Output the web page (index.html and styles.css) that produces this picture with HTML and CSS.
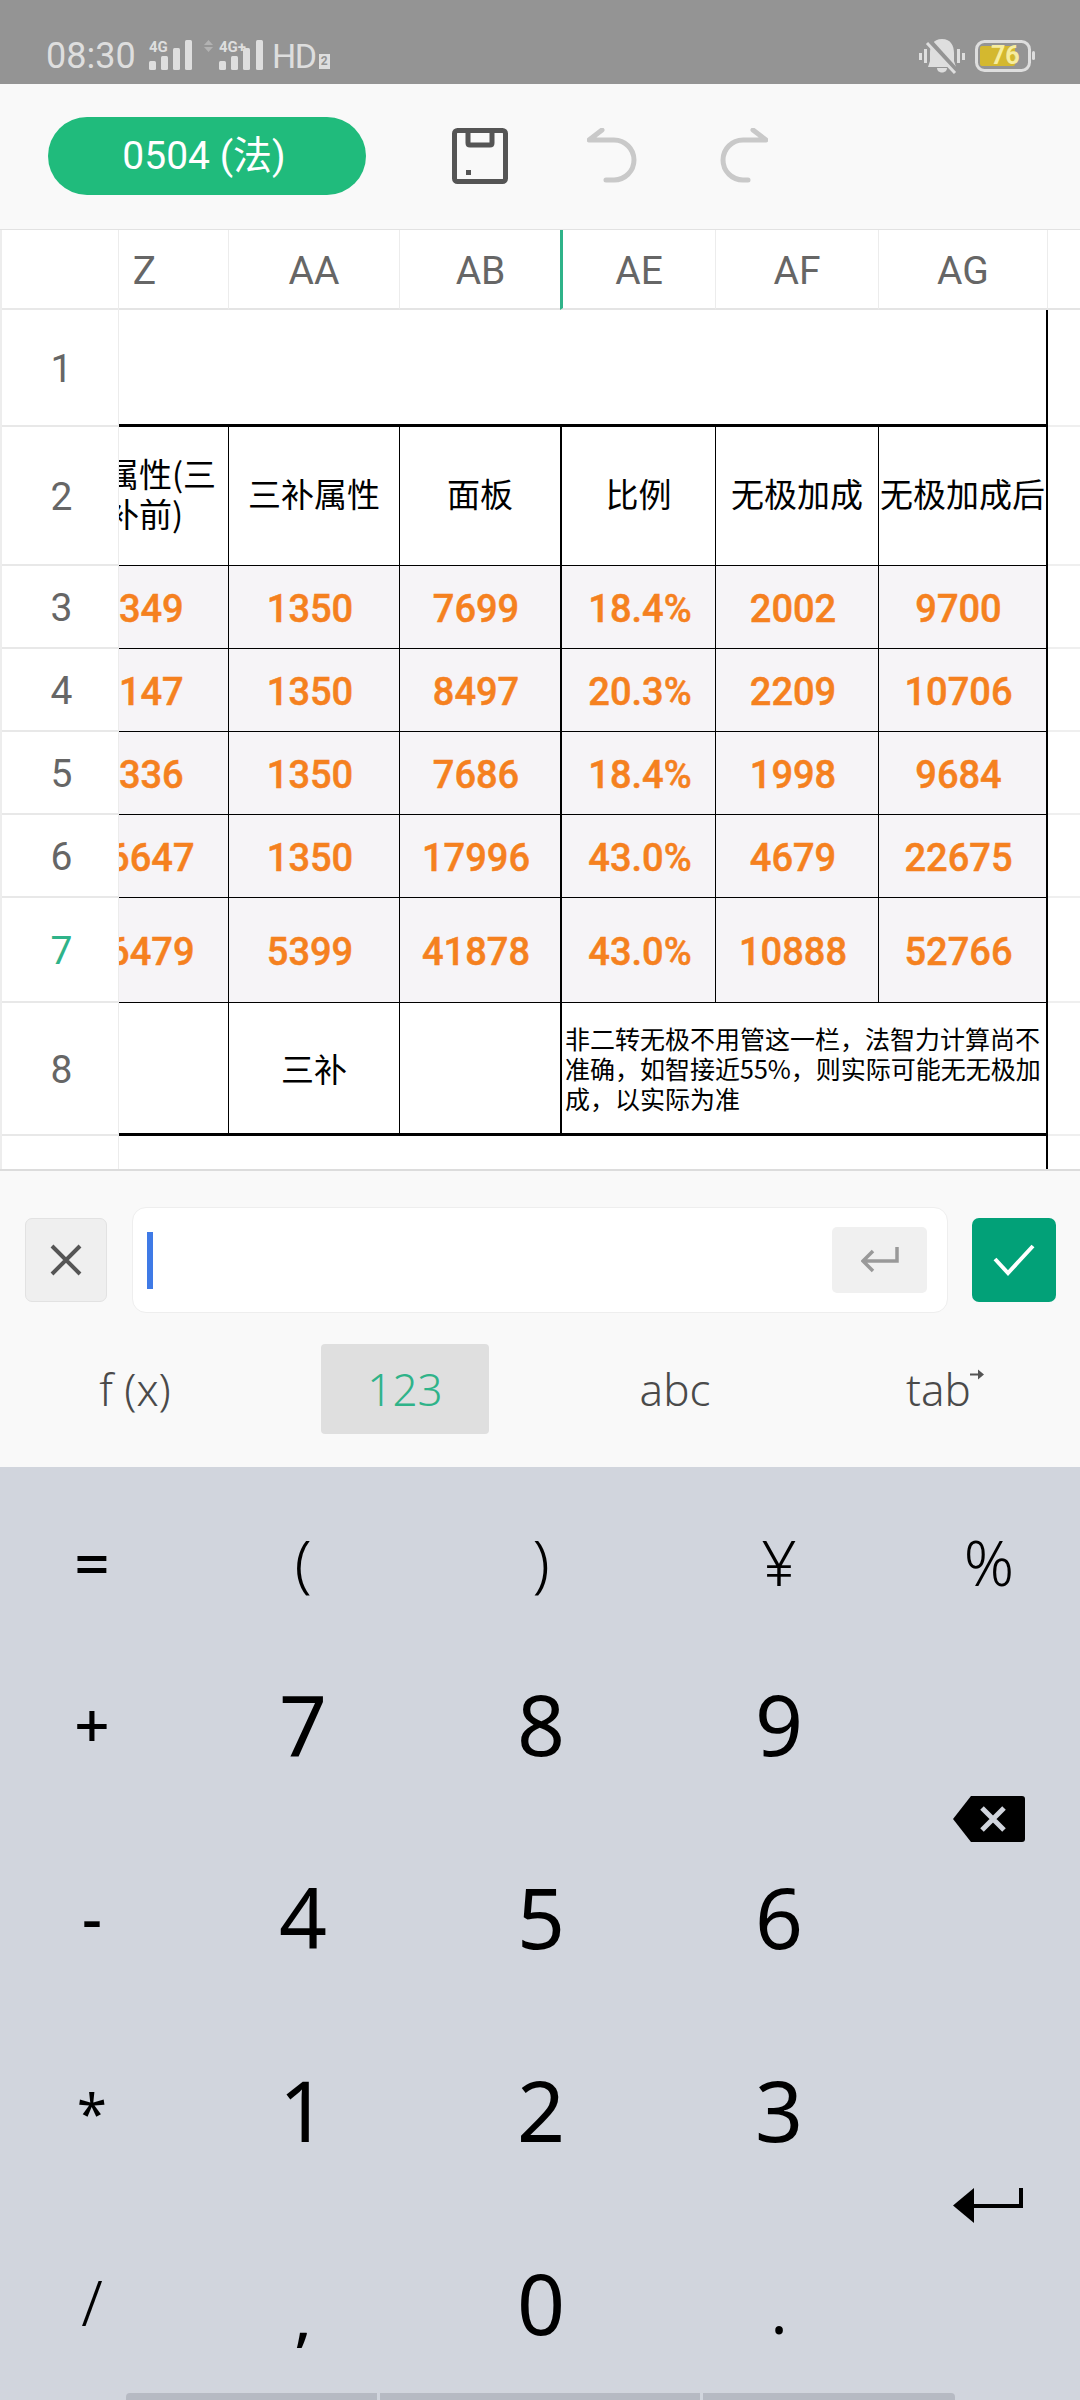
FILE: index.html
```html
<!DOCTYPE html>
<html>
<head>
  <meta charset="utf-8">
  <title>0504 (法)</title>
  <link rel="stylesheet" href="styles.css">
</head>
<body>
  <div class="status-bar">
    <div class="status-left">
      <span class="status-time">08:30</span>
      <svg class="signal-a" width="44" height="34" viewBox="0 0 44 34">
        <text x="0" y="13" class="signal-label">4G</text>
        <rect x="0" y="22" width="7" height="9" rx="1.5"/>
        <rect x="12" y="17" width="7" height="14" rx="1.5"/>
        <rect x="24" y="9" width="7" height="22" rx="1.5"/>
        <rect x="36" y="1" width="7" height="30" rx="1.5"/>
      </svg>
      <svg class="signal-b" width="59" height="34" viewBox="0 0 59 34">
        <path class="signal-arrows" d="M4.5 1 L9 6 H0 Z M0 8 H9 L4.5 13 Z"/>
        <text x="15" y="13" class="signal-label">4G+</text>
        <rect x="15" y="22" width="7" height="9" rx="1.5"/>
        <rect x="27" y="17" width="7" height="14" rx="1.5"/>
        <rect x="39" y="9" width="7" height="22" rx="1.5"/>
        <rect x="52" y="1" width="7" height="30" rx="1.5"/>
      </svg>
      <span class="status-hd">HD</span>
      <span class="status-sim">2</span>
    </div>
    <div class="status-right">
      <svg width="46" height="36" viewBox="0 0 46 36">
        <g fill="#dedede">
          <rect x="0" y="15" width="3" height="7"/>
          <rect x="5" y="11" width="3" height="14"/>
          <rect x="38" y="11" width="3" height="14"/>
          <rect x="43" y="15" width="3" height="7"/>
          <path d="M23 1 C14 1 11 8 11 15 V23 L9 29 H37 L35 23 V15 C35 8 32 1 23 1 Z"/>
          <path d="M18 30 H28 C28 36 18 36 18 30 Z"/>
        </g>
        <path d="M9 2 L37 33" stroke="#949494" stroke-width="6" fill="none"/>
        <path d="M8 5 L36 35" stroke="#dedede" stroke-width="3" fill="none"/>
      </svg>
      <svg class="battery" width="60" height="32" viewBox="0 0 60 32">
        <rect x="1.5" y="1.5" width="53" height="29" rx="8" fill="none" stroke="#dedede" stroke-width="3"/>
        <rect x="5" y="6" width="35" height="20" rx="2" fill="#d4b82f"/>
        <rect x="57" y="11" width="3" height="9" rx="1.5" fill="#dedede"/>
        <text x="16" y="24" class="battery-level">76</text>
      </svg>
    </div>
  </div>

  <div class="toolbar">
    <div class="doc-pill">0504 (法)</div>
    <svg class="tool-save" width="56" height="56" viewBox="0 0 56 56">
      <rect x="2.5" y="2.5" width="51" height="51" rx="3" fill="none" stroke="#555" stroke-width="5"/>
      <path d="M16 3 V15 Q16 17 18 17 H38 Q40 17 40 15 V3" fill="none" stroke="#555" stroke-width="5"/>
      <rect x="14" y="42" width="5" height="5" fill="#555"/>
    </svg>
    <svg class="tool-undo" width="50" height="56" viewBox="0 0 50 56">
      <path d="M15 2 L2 12 H27 A20 20 0 0 1 27 52 H19" fill="none" stroke="#c9c9c9" stroke-width="5" stroke-linecap="round" stroke-linejoin="round"/>
    </svg>
    <svg class="tool-redo" width="50" height="56" viewBox="0 0 50 56">
      <path d="M35 2 L48 12 H25 A20 20 0 0 0 25 52 H30" fill="none" stroke="#c9c9c9" stroke-width="5" stroke-linecap="round" stroke-linejoin="round"/>
    </svg>
  </div>

  <div class="sheet">
    <div class="row-nums">
      <div class="row-num"></div>
      <div class="row-num">1</div>
      <div class="row-num">2</div>
      <div class="row-num">3</div>
      <div class="row-num">4</div>
      <div class="row-num">5</div>
      <div class="row-num">6</div>
      <div class="row-num row-num-active">7</div>
      <div class="row-num">8</div>
      <div class="row-num"></div>
    </div>

    <div class="sheet-clip">
      <div class="cells">
        <div class="col-head">Z</div>
        <div class="col-head">AA</div>
        <div class="col-head">AB</div>
        <div class="col-head col-head-active">AE</div>
        <div class="col-head">AF</div>
        <div class="col-head">AG</div>
        <div class="col-head col-head-end"></div>

        <div class="cell cell-title"></div>
        <div class="cell-off"></div>

        <div class="cell cell-label"><span>总属性(三补前)</span></div>
        <div class="cell cell-label">三补属性</div>
        <div class="cell cell-label cell-split">面板</div>
        <div class="cell cell-label">比例</div>
        <div class="cell cell-label">无极加成</div>
        <div class="cell cell-label cell-last">无极加成后</div>
        <div class="cell-off"></div>

        <div class="cell cell-num">6349</div>
        <div class="cell cell-num">1350</div>
        <div class="cell cell-num cell-split">7699</div>
        <div class="cell cell-num cell-pct">18.4%</div>
        <div class="cell cell-num">2002</div>
        <div class="cell cell-num cell-last">9700</div>
        <div class="cell-off"></div>

        <div class="cell cell-num">7147</div>
        <div class="cell cell-num">1350</div>
        <div class="cell cell-num cell-split">8497</div>
        <div class="cell cell-num cell-pct">20.3%</div>
        <div class="cell cell-num">2209</div>
        <div class="cell cell-num cell-last">10706</div>
        <div class="cell-off"></div>

        <div class="cell cell-num">6336</div>
        <div class="cell cell-num">1350</div>
        <div class="cell cell-num cell-split">7686</div>
        <div class="cell cell-num cell-pct">18.4%</div>
        <div class="cell cell-num">1998</div>
        <div class="cell cell-num cell-last">9684</div>
        <div class="cell-off"></div>

        <div class="cell cell-num">16647</div>
        <div class="cell cell-num">1350</div>
        <div class="cell cell-num cell-split">17996</div>
        <div class="cell cell-num cell-pct">43.0%</div>
        <div class="cell cell-num">4679</div>
        <div class="cell cell-num cell-last">22675</div>
        <div class="cell-off"></div>

        <div class="cell cell-num">36479</div>
        <div class="cell cell-num">5399</div>
        <div class="cell cell-num cell-split">41878</div>
        <div class="cell cell-num cell-pct">43.0%</div>
        <div class="cell cell-num">10888</div>
        <div class="cell cell-num cell-last">52766</div>
        <div class="cell-off"></div>

        <div class="cell cell-foot"></div>
        <div class="cell cell-foot cell-word">三补</div>
        <div class="cell cell-foot cell-split"></div>
        <div class="cell cell-foot cell-note">非二转无极不用管这一栏，法智力计算尚不准确，如智接近55%，则实际可能无无极加成，以实际为准</div>
        <div class="cell-off"></div>

        <div class="cell-tail"></div>
      </div>
    </div>
  </div>

  <div class="formula-panel">
    <div class="formula-row">
      <div class="formula-cancel">
        <svg width="32" height="32" viewBox="0 0 32 32">
          <path d="M2 2 L30 30 M30 2 L2 30" stroke="#555" stroke-width="4" fill="none"/>
        </svg>
      </div>
      <div class="formula-input">
        <div class="formula-caret"></div>
        <div class="formula-enter">
          <svg width="38" height="28" viewBox="0 0 38 28">
            <path d="M36 1 V15 H3 M12 5 L2 15 L12 25" stroke="#999" stroke-width="3.5" fill="none"/>
          </svg>
        </div>
      </div>
      <div class="formula-ok">
        <svg width="42" height="32" viewBox="0 0 42 32">
          <path d="M2 15 L15 29 L40 2" stroke="#fff" stroke-width="4" fill="none"/>
        </svg>
      </div>
    </div>
    <div class="key-tabs">
      <div class="key-tab">f (x)</div>
      <div class="key-tab"><span class="key-tab-active">123</span></div>
      <div class="key-tab">abc</div>
      <div class="key-tab">tab<svg class="tab-arrow" width="14" height="12" viewBox="0 0 14 12"><path d="M0 4.5 H8 V0.5 L14 5.5 L8 10.5 V6.5 H0 Z" fill="#555"/></svg></div>
    </div>
  </div>

  <div class="keyboard">
    <div class="key-grid">
      <div class="key key-sym key-heavy">=</div>
      <div class="key key-sym key-thin">(</div>
      <div class="key key-sym key-thin">)</div>
      <div class="key key-sym key-thin">¥</div>
      <div class="key key-sym key-thin">%</div>

      <div class="key key-sym key-heavy">+</div>
      <div class="key">7</div>
      <div class="key">8</div>
      <div class="key">9</div>
      <div class="key key-wide key-back">
        <svg width="72" height="46" viewBox="0 0 72 46">
          <path d="M18 0 H69 Q72 0 72 3 V43 Q72 46 69 46 H18 L0 23 Z" fill="#000"/>
          <path d="M29 12 L51 34 M51 12 L29 34" stroke="#d1d5dd" stroke-width="5" fill="none"/>
        </svg>
      </div>

      <div class="key key-sym key-heavy">-</div>
      <div class="key">4</div>
      <div class="key">5</div>
      <div class="key">6</div>

      <div class="key key-sym key-star">*</div>
      <div class="key">1</div>
      <div class="key">2</div>
      <div class="key">3</div>
      <div class="key key-wide key-enter">
        <svg width="72" height="36" viewBox="0 0 72 36">
          <path d="M68 0 V18 H18" stroke="#000" stroke-width="4" fill="none"/>
          <path d="M21 0 V35 L0 17.5 Z" fill="#000"/>
        </svg>
      </div>

      <div class="key key-sym key-thin key-last">/</div>
      <div class="key key-sym key-comma">,</div>
      <div class="key key-last">0</div>
      <div class="key key-sym key-dot">.</div>
    </div>
    <div class="key-bars">
      <div class="key-bar key-bar-a"></div>
      <div class="key-bar key-bar-b"></div>
      <div class="key-bar key-bar-c"></div>
    </div>
  </div>
</body>
</html>
```

FILE: styles.css
```css
* {
  box-sizing: border-box;
}

body {
  margin: 0;
  width: 1080px;
  height: 2400px;
  overflow: hidden;
  font-family: "Roboto", "Noto Sans CJK SC", sans-serif;
  background: #f9f9f9;
}

/* status bar */
.status-bar {
  height: 84px;
  padding: 27px 45px 0 46px;
  display: flex;
  justify-content: space-between;
  align-items: center;
  background: #949494;
  color: #dedede;
}

.status-left {
  display: flex;
  align-items: center;
}

.status-time {
  font-size: 36px;
  width: 103px;
}

.status-left rect {
  fill: #dedede;
}

.signal-a {
  margin-right: 11px;
}

.signal-label {
  font-size: 15px;
  font-weight: 700;
  fill: #dedede;
}

.signal-arrows {
  fill: #b2b2b2;
}

.status-hd {
  margin-left: 9px;
  font-size: 34px;
  letter-spacing: -1.5px;
}

.status-sim {
  margin: 12px 0 0 3px;
  width: 11px;
  height: 15px;
  background: #dedede;
  color: #949494;
  font-size: 12px;
  font-weight: 700;
  line-height: 15px;
  text-align: center;
}

.status-right {
  display: flex;
  align-items: center;
  gap: 10px;
}

.battery-level {
  font-size: 25px;
  font-weight: 700;
  fill: #f6eda0;
}

/* toolbar */
.toolbar {
  height: 146px;
  padding: 0 0 2px 48px;
  display: flex;
  align-items: center;
  background: #f9f9f9;
  border-bottom: 1px solid #e2e2e2;
}

.doc-pill {
  width: 318px;
  height: 78px;
  padding-right: 6px;
  border-radius: 39px;
  background: #20bb7c;
  color: #fff;
  font-size: 39px;
  line-height: 78px;
  text-align: center;
}

.tool-save {
  margin-left: 86px;
}

.tool-undo {
  margin-left: 79px;
}

.tool-redo {
  margin-left: 81px;
}

/* sheet */
.sheet {
  --sheet-rows: 80px 117px 139px 83px 83px 83px 83px 105px 133px 34px;
  height: 941px;
  display: flex;
  background: #fff;
  border-bottom: 2px solid #dcdcdc;
  overflow: hidden;
}

.row-nums {
  flex: none;
  width: 119px;
  display: grid;
  grid-template-rows: var(--sheet-rows);
  border-left: 2px solid #ededed;
  border-right: 1px solid #ececec;
}

.row-num {
  display: flex;
  align-items: center;
  justify-content: center;
  padding: 3px 0 0 3px;
  font-size: 39px;
  color: #666;
  border-bottom: 2px solid #e8e8e8;
}

.row-num-active {
  color: #2fb389;
}

.row-num:last-child {
  border-bottom: none;
}

.sheet-clip {
  flex: 1;
  overflow: hidden;
}

.cells {
  margin-left: -58px;
  width: 1020px;
  display: grid;
  grid-template-columns: 168px 171px 162px 154px 163px 169px 33px;
  grid-template-rows: var(--sheet-rows);
}

.col-head {
  display: flex;
  align-items: center;
  justify-content: center;
  padding-top: 3px;
  font-size: 39px;
  color: #666;
  border-right: 1px solid #ececec;
  border-bottom: 2px solid #e4e4e4;
}

.col-head-active {
  border-left: 3px solid #2fb389;
  margin-left: -2px;
}

.col-head-end {
  border-right: none;
}

.cell {
  display: flex;
  align-items: center;
  justify-content: center;
  border-right: 1px solid #000;
  border-bottom: 1px solid #000;
  text-align: center;
}

.cell-title {
  grid-column: span 6;
  border-right-width: 2px;
  border-bottom-width: 3px;
}

.cell-off {
  border-bottom: 2px solid #efefef;
}

.cell-tail {
  grid-column: span 6;
  border-right: 2px solid #000;
}

.cell-label,
.cell-word {
  font-size: 33px;
  line-height: 40px;
  color: #000;
  font-family: "Noto Sans CJK SC", sans-serif;
}

.cell-label {
  padding-bottom: 7px;
}

.cell-num {
  padding: 3px 8px 0 0;
  font-size: 38px;
  font-weight: 500;
  -webkit-text-stroke: 0.5px #f5811f;
  color: #f5811f;
  background: #f6f4f7;
}

.cell-pct {
  padding: 3px 0 0 3px;
}

.cell-split {
  border-right-width: 2px;
}

.cell-last {
  border-right-width: 2px;
  white-space: nowrap;
}

.cell-foot {
  border-bottom-width: 3px;
}

.cell-note {
  grid-column: span 3;
  border-right-width: 2px;
  justify-content: flex-start;
  padding-left: 3px;
  font-family: "Noto Sans CJK SC", sans-serif;
  font-size: 25px;
  line-height: 30px;
  color: #000;
  text-align: left;
}

/* formula entry */
.formula-panel {
  height: 296px;
  padding-top: 36px;
  background: #f9f9f9;
}

.formula-row {
  display: flex;
  align-items: center;
  padding-left: 25px;
}

.formula-cancel {
  width: 82px;
  height: 84px;
  border: 1px solid #e2e2e2;
  border-radius: 7px;
  background: #efefef;
  display: flex;
  align-items: center;
  justify-content: center;
}

.formula-input {
  width: 816px;
  height: 106px;
  margin: 0 24px 0 25px;
  padding: 0 20px 0 14px;
  display: flex;
  align-items: center;
  justify-content: space-between;
  background: #fff;
  border: 1px solid #eee;
  border-radius: 14px;
}

.formula-caret {
  width: 6px;
  height: 57px;
  background: #3f7ae6;
}

.formula-enter {
  width: 95px;
  height: 66px;
  border-radius: 5px;
  background: #f0f0f0;
  display: flex;
  align-items: center;
  justify-content: center;
}

.formula-ok {
  width: 84px;
  height: 84px;
  border-radius: 7px;
  background: #02a178;
  display: flex;
  align-items: center;
  justify-content: center;
}

.key-tabs {
  margin-top: 31px;
  display: grid;
  grid-template-columns: repeat(4, 270px);
  height: 90px;
}

.key-tab {
  display: flex;
  align-items: center;
  justify-content: center;
  font-family: "Noto Sans", sans-serif;
  font-size: 44px;
  font-weight: 300;
  color: #4a4a4a;
}

.key-tab-active {
  width: 168px;
  height: 90px;
  line-height: 90px;
  text-align: center;
  border-radius: 4px;
  background: #dfdfdf;
  color: #2fb389;
}

.tab-arrow {
  margin: -28px 0 0 -1px;
}

/* number keys */
.keyboard {
  height: 933px;
  padding-top: 30px;
  background: #d1d5dd;
  display: flex;
  flex-direction: column;
}

.key-grid {
  height: 893px;
  display: grid;
  grid-template-columns: 184px 238px 238px 238px 182px;
  grid-template-rows: 130px 193px 193px 193px 184px;
}

.key {
  display: flex;
  align-items: center;
  justify-content: center;
  font-family: "Noto Sans", sans-serif;
  font-size: 84px;
  font-weight: 400;
  color: #000;
}

.key-sym {
  font-size: 62px;
}

.key-thin {
  font-weight: 350;
}

.key-heavy {
  font-weight: 500;
}

.key-star {
  padding-top: 6px;
  font-size: 54px;
}

.key-wide {
  grid-row: span 2;
}

.key-back {
  padding-bottom: 2px;
}

.key-enter {
  padding-top: 8px;
}

.key-last {
  padding-top: 8px;
}

.key-comma {
  padding-top: 36px;
  font-weight: 500;
}

.key-dot {
  padding-top: 24px;
}

.key-bars {
  margin: 3px 0 0 126px;
  display: flex;
  gap: 3px;
}

.key-bar {
  height: 7px;
  background: #b6bac3;
}

.key-bar-a {
  width: 251px;
  border-radius: 4px 0 0 0;
}

.key-bar-b {
  width: 320px;
}

.key-bar-c {
  width: 252px;
  border-radius: 0 4px 0 0;
}
```
